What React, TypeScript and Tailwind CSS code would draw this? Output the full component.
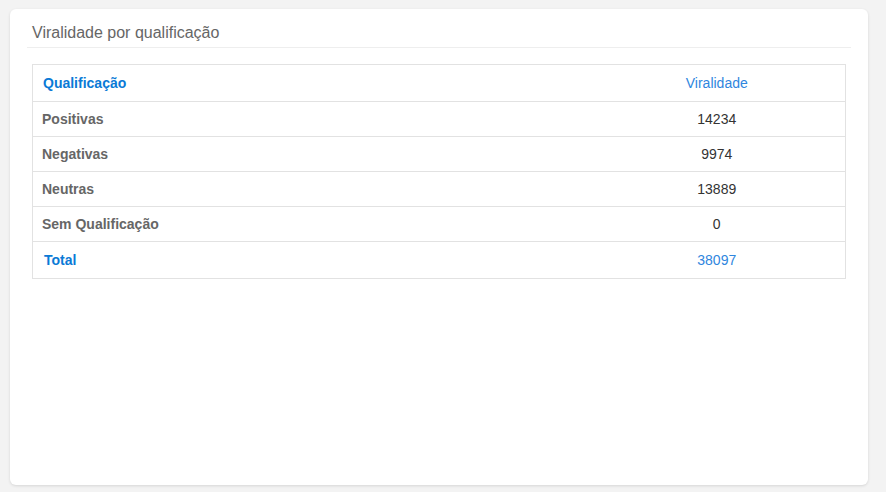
import React from "react";

const rows = [
  { label: "Positivas", value: "14234" },
  { label: "Negativas", value: "9974" },
  { label: "Neutras", value: "13889" },
  { label: "Sem Qualificação", value: "0" },
];

export default function App() {
  return (
    <div
      className="w-[886px] h-[492px] bg-[#f3f3f3] pt-[9px] pl-[10px] pr-[18px] pb-[7px]"
      style={{ fontFamily: '"Liberation Sans", Arial, sans-serif' }}
    >
      <div className="h-full bg-white rounded-[6px] shadow-[0_1px_3px_rgba(0,0,0,0.12)] pt-[14px] px-[17px]">
        <div className="border-b border-[#eeeeee] pl-[5px] h-[25px] text-[16px] leading-[20px] text-[#666666]">
          Viralidade por qualificação
        </div>
        <div className="pt-[16px] pl-[5px] pr-[5px]">
          <table className="w-full border-collapse border border-[#e2e2e2] text-[14px]">
            <tbody>
              <tr className="h-[37px] border-b border-[#e2e2e2]">
                <td className="w-[556px] pl-[10px] pt-[1px] font-bold text-[#0a7ad6]">Qualificação</td>
                <td className="text-center pt-[1px] text-[#2f86de]">Viralidade</td>
              </tr>
              {rows.map((r) => (
                <tr key={r.label} className="h-[35px] border-b border-[#e2e2e2]">
                  <td className="pl-[9px] pt-[1px] font-bold text-[#666666]">{r.label}</td>
                  <td className="text-center pt-[1px] text-[#333333]">{r.value}</td>
                </tr>
              ))}
              <tr className="h-[37px]">
                <td className="pl-[11px] pt-[1px] font-bold text-[#0a7ad6]">Total</td>
                <td className="text-center pt-[1px] text-[#2f86de]">38097</td>
              </tr>
            </tbody>
          </table>
        </div>
      </div>
    </div>
  );
}
